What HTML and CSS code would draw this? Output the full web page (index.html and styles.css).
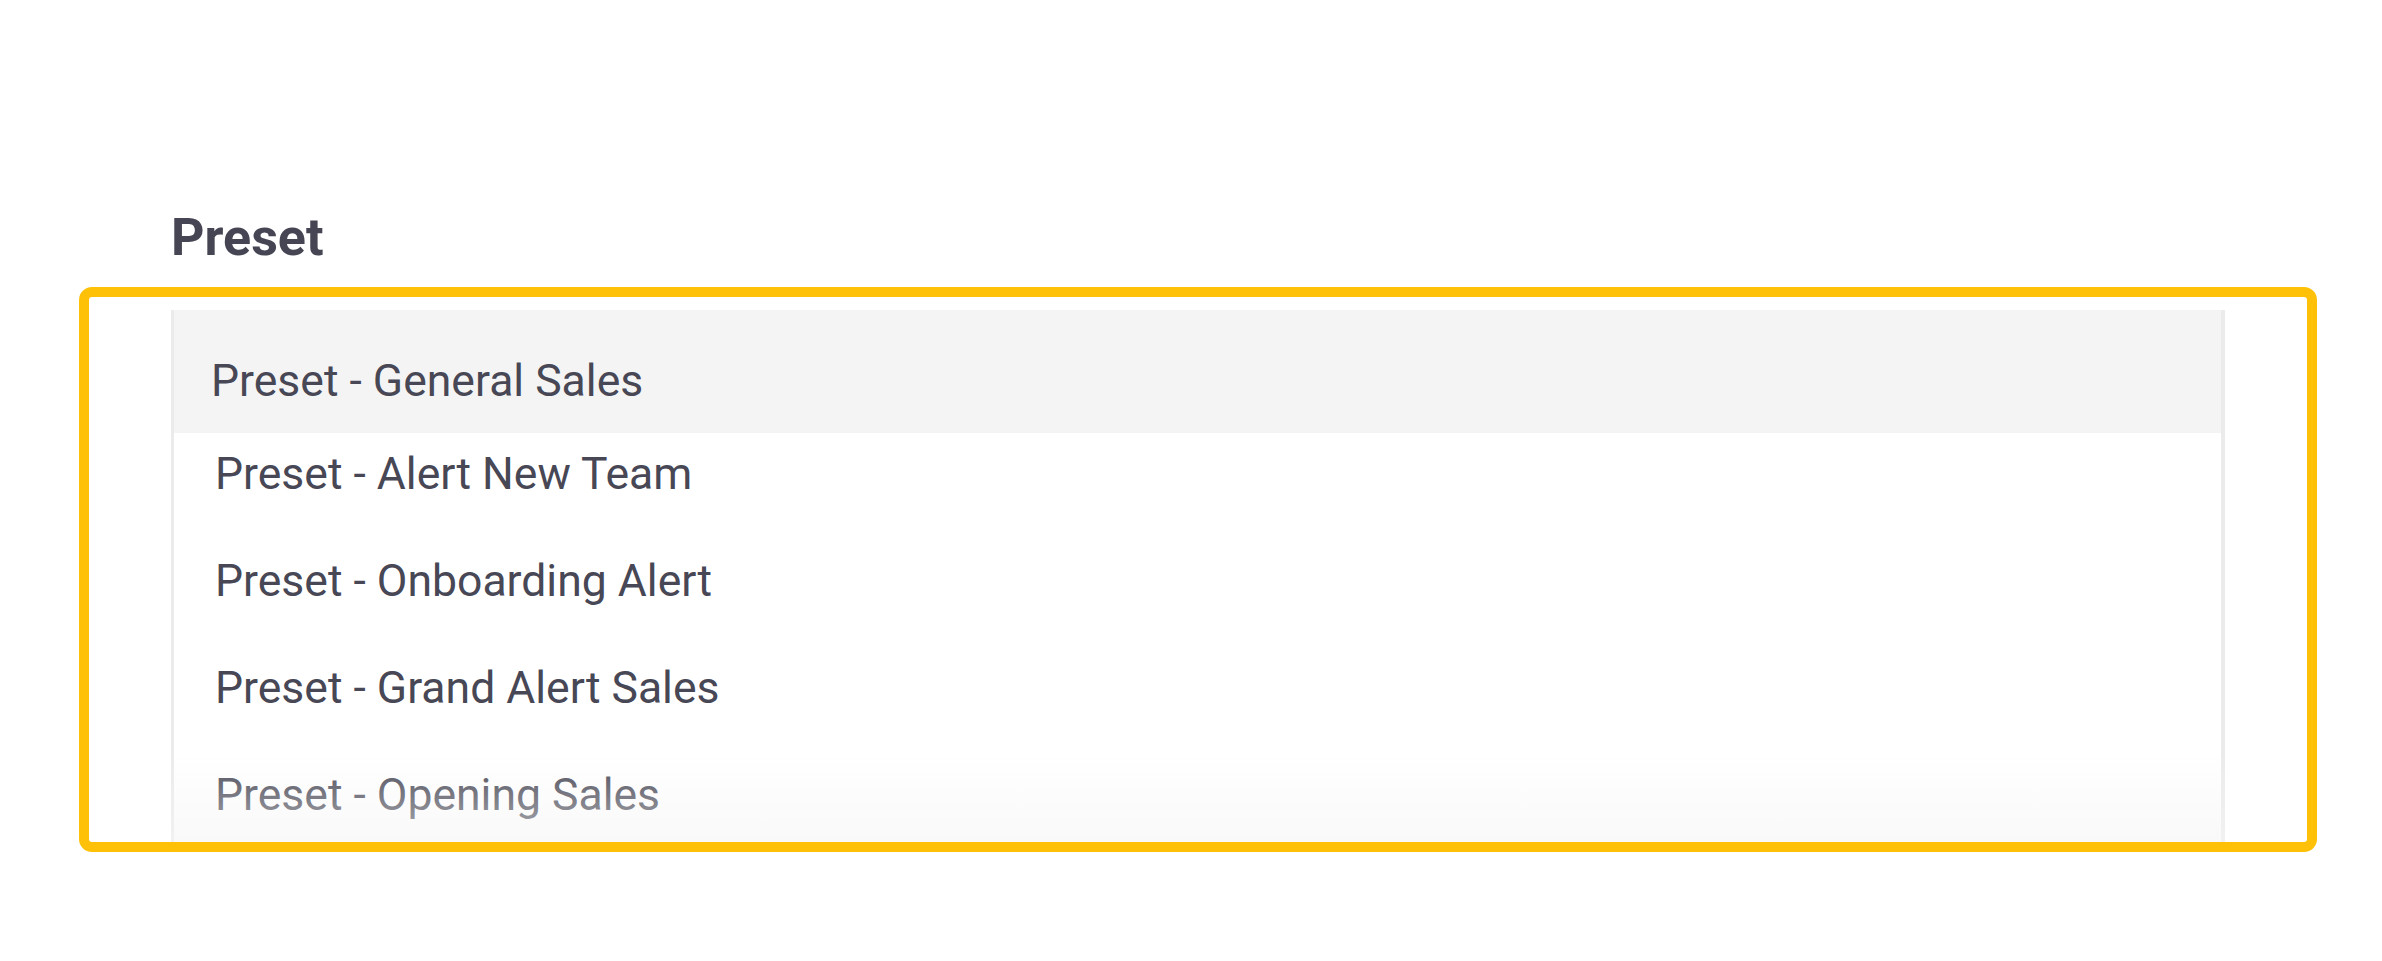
FILE: index.html
```html
<!DOCTYPE html>
<html lang="en">
<head>
<meta charset="utf-8">
<title>Preset</title>
<link rel="stylesheet" href="styles.css">
</head>
<body>
  <div class="field">
    <div class="label">Preset</div>
    <div class="frame">
      <ul class="menu">
        <li class="item active">Preset - General Sales</li>
        <li class="item">Preset - Alert New Team</li>
        <li class="item">Preset - Onboarding Alert</li>
        <li class="item">Preset - Grand Alert Sales</li>
        <li class="item">Preset - Opening Sales</li>
      </ul>
      <div class="fade"></div>
    </div>
  </div>
</body>
</html>
```

FILE: styles.css
```css
html, body {
  margin: 0;
  padding: 0;
  background: #ffffff;
}

body {
  width: 2382px;
  height: 961px;
  overflow: hidden;
  font-family: Roboto, "Liberation Sans", Arial, sans-serif;
}

.field {
  padding: 207px 0 0 79px;
}

.label {
  margin-left: 92px;
  font-size: 52px;
  line-height: 62px;
  font-weight: 700;
  color: #454553;
  height: 62px;
}

.frame {
  position: relative;
  margin-top: 18px;
  width: 2238px;
  height: 565px;
  box-sizing: border-box;
  border: 10px solid #ffc107;
  border-radius: 13px;
  padding: 13px 82px 0 82px;
  overflow: hidden;
  background: #ffffff;
}

.menu {
  list-style: none;
  margin: 0;
  padding: 0;
  background: #ffffff;
  border-left: 3px solid #ebebeb;
  border-right: 4px solid #ebebeb;
}

.item {
  font-size: 44.5px;
  line-height: 52px;
  color: #474755;
  padding: 15px 40px 40px 41px;
  white-space: nowrap;
}

.item.active {
  background: #f4f4f4;
  padding: 45px 36px 26px 37px;
}

.fade {
  position: absolute;
  left: 82px;
  right: 82px;
  bottom: 0;
  height: 90px;
  background: linear-gradient(to bottom, rgba(245, 245, 245, 0) 0%, rgba(245, 245, 245, 0.6) 100%);
  pointer-events: none;
}
```
